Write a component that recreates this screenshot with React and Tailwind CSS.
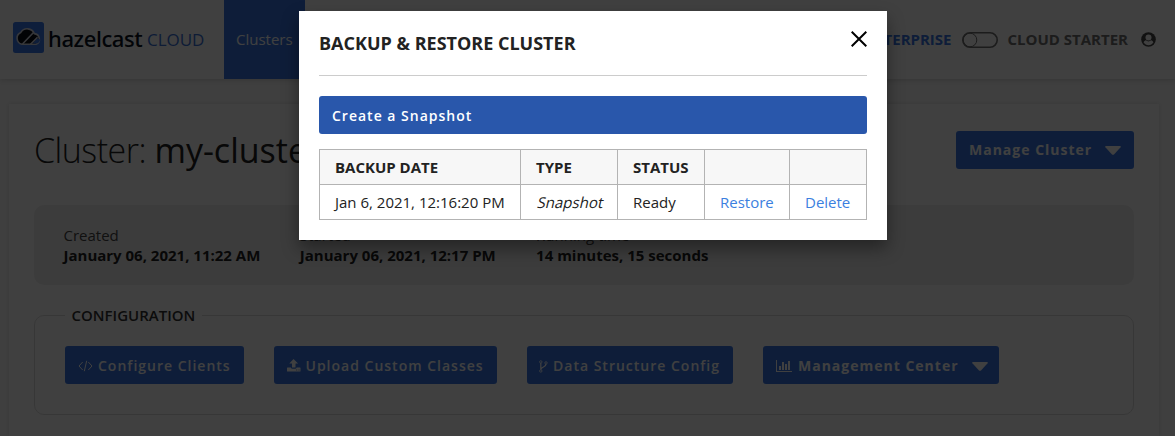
import React from "react";

function Logo() {
  return (
    <div className="flex h-[79px] w-[224px] shrink-0 items-center pl-[13px]">
      <svg className="-mt-[5px] h-[31px] w-[31px] shrink-0" viewBox="0 0 31 31">
        <rect width="31" height="31" rx="2.5" fill="#3a78ea" />
        <path d="M9 22.300a6.300 6.300 0 0 1-1.200-11.900A7.600 7.600 0 0 1 21.300 11.600a5.600 5.600 0 0 1 1.700 10.700z" fill="#080c14" stroke="#d8dce8" strokeWidth="1.600" />
        <path d="M19.500 21.500l4.800-5.300 2.700 1.200a4 4 0 0 1-4 4.100z" fill="#3a78ea" />
        <path d="M9.500 22L20.500 10.500M17.500 22.300l7-7" stroke="#d8dce8" strokeWidth="1.600" />
      </svg>
      <span className="ml-[4px] w-[95px] -mt-[4px] whitespace-nowrap font-['Noto_Sans',sans-serif] text-[22px] leading-[30px] font-medium tracking-[-0.4px] text-[#081020]">hazelcast</span>
      <span className="ml-[4px] whitespace-nowrap text-[17px] leading-[24px] font-medium tracking-[-0.05px] text-[#3a72d8]">CLOUD</span>
    </div>
  );
}

function UserIcon() {
  return (
    <svg className="ml-[13px] h-[15px] w-[15px]" viewBox="0 0 15 15">
      <circle cx="7.5" cy="7.5" r="7.3" fill="#444" />
      <circle cx="7.5" cy="5.5" r="3" fill="#fff" />
      <path d="M2.600 10.500C3.100 9.100 3.900 8.500 4.900 8.300Q7.500 10.500 10.100 8.300C11.100 8.500 11.900 9.100 12.400 10.500A5.800 5.800 0 0 1 2.600 10.500z" fill="#fff" />
    </svg>
  );
}

function Caret() {
  return (
    <svg className="ml-[13px] h-[9px] w-[16px]" viewBox="0 0 16 9">
      <path d="M1 0H15Q16.300 .2 15.600 1.300L9 8.400Q8 9.300 7 8.400L.4 1.300Q-.3 .2 1 0Z" fill="#fff" />
    </svg>
  );
}

function CodeIcon() {
  return (
    <svg className="mr-[5px] h-[12px] w-[15px]" viewBox="0 0 15 12" fill="none" stroke="#fff" strokeWidth="1">
      <path d="M4.700 2L1 6l3.700 4M10.300 2L14 6l-3.700 4M8.700.8L6.300 11.200" />
    </svg>
  );
}

function UploadIcon() {
  return (
    <svg className="-mt-px mr-[4.500px] h-[13px] w-[14px]" viewBox="0 0 14 13">
      <path d="M6.500 0L2.300 4.500H5v4h3.500v-4h2.600zM.5 8.500h3.400q.3 1.200 1.500 1.200h2.700Q9.300 9.700 9.600 8.500h3.400q.5 0 .5.500v3.100q0 .5-.5.500H.5q-.5 0-.5-.5V9Q0 8.500 .5 8.500z" fill="#fff" />
      <path d="M9.200 11h1M11.500 11h1" stroke="#2d5db0" strokeWidth=".8" />
    </svg>
  );
}

function ForkIcon() {
  return (
    <svg className="-ml-px mr-[5px] h-[13px] w-[9px]" viewBox="0 0 9 13" fill="none" stroke="#fff" strokeWidth=".8">
      <circle cx="1.800" cy="1.900" r="1.200" />
      <circle cx="7" cy="2.900" r="1.200" />
      <circle cx="1.800" cy="11" r="1.200" />
      <path d="M1.800 3.100v6.700M7 4.100C7 7.500 2.400 6.500 1.900 9.500" strokeWidth="1.200" />
    </svg>
  );
}

function ChartIcon() {
  return (
    <svg className="-mt-px mr-[6px] h-[12px] w-[16px]" viewBox="0 0 16 12" fill="#fff">
      <path d="M0 0h1v11h15v1H0zM3 6h2v4H3zM6 2h2v8H6zM9 4h2v6H9zM12 1h2v9h-2z" />
    </svg>
  );
}

function PageButton({ children, className }) {
  return (
    <button className={"flex h-[38px] items-center rounded-[3px] bg-[#3876e4] pl-[13px] text-[14px] leading-none whitespace-nowrap text-white " + className}>
      {children}
    </button>
  );
}

function Stat({ label, value }) {
  return (
    <div className="w-[236.300px] text-[15px] leading-[20px] whitespace-nowrap text-[#444]">
      <div>{label}</div>
      <div className="font-bold text-[#222]">{value}</div>
    </div>
  );
}

const cell = "border border-[#b3b3b3] px-[15px] text-left whitespace-nowrap";

function Modal() {
  return (
    <div className="absolute top-[11px] left-[299px] h-[229px] w-[588px] bg-white px-[20px] text-[#222] shadow-[0_8px_16px_rgba(0,0,0,0.4)]">
      <div className="flex h-[65px] items-center justify-between border-b border-[#ccc]">
        <h2 className="mt-px text-[18px] font-bold">BACKUP &amp; RESTORE CLUSTER</h2>
        <svg className="-mt-[8px] h-[16px] w-[16px]" viewBox="0 0 16 16">
          <path d="M.7.7l14.600 14.600M15.300.7L.7 15.300" stroke="#000" strokeWidth="2" />
        </svg>
      </div>
      <button className="mt-[20px] flex h-[38px] w-full items-center rounded-[3px] bg-[#2957ab] pl-[13px] text-[14px] font-semibold tracking-[1px] text-white">
        Create a Snapshot
      </button>
      <table className="mt-[15px] w-full table-fixed border-collapse text-[15px] leading-[20px]">
        <colgroup>
          <col className="w-[201px]" />
          <col className="w-[97px]" />
          <col className="w-[87px]" />
          <col className="w-[85px]" />
          <col className="w-[77px]" />
        </colgroup>
        <thead>
          <tr className="h-[35px] bg-[#f7f7f7]">
            <th className={cell}>BACKUP DATE</th>
            <th className={cell}>TYPE</th>
            <th className={cell}>STATUS</th>
            <th className={cell}></th>
            <th className={cell}></th>
          </tr>
        </thead>
        <tbody>
          <tr className="h-[35px]">
            <td className={cell}>Jan 6, 2021, 12:16:20 PM</td>
            <td className={cell}><em className="ml-[1.500px] inline-block -skew-x-[13deg] not-italic">Snapshot</em></td>
            <td className={cell}>Ready</td>
            <td className={cell + " text-[#3b7fe0]"}>Restore</td>
            <td className={cell + " text-[#3b7fe0]"}>Delete</td>
          </tr>
        </tbody>
      </table>
    </div>
  );
}

export default function App() {
  return (
    <div className="relative h-[436px] w-[1175px] overflow-hidden bg-[#fafafa] font-['Open_Sans',sans-serif]">
      <header className="relative flex h-[79px] items-center bg-white shadow-[0_1px_6px_rgba(0,0,0,0.16)]">
        <Logo />
        <nav className="flex h-full w-[81px] items-center bg-[#3876e4] pl-[12px] text-[15px] text-white">Clusters</nav>
        <div className="ml-auto flex items-center pr-[19px] text-[15px] font-bold whitespace-nowrap">
          <span className="text-[#3876e4]">CLOUD ENTERPRISE</span>
          <svg className="mx-[10px] h-[16px] w-[36px]" viewBox="0 0 36 16" fill="none" stroke="#707070">
            <rect x=".8" y=".8" width="34.400" height="14.400" rx="7.200" strokeWidth="1.600" />
            <circle cx="8" cy="8" r="6.800" />
          </svg>
          <span className="text-[#707070]">CLOUD STARTER</span>
          <UserIcon />
        </div>
      </header>
      <main className="mx-auto mt-[25px] mr-[16px] ml-[9px] h-[332px] bg-white px-[25px] shadow-[0_0_4px_rgba(0,0,0,0.12)]">
        <div className="flex h-[101px] items-start justify-between">
          <h1 className="mt-[22px] text-[34px] leading-[48px] font-light whitespace-nowrap text-[#222]">
            <span className="tracking-[-0.5px]">Cluster: </span><span className="font-normal">my-cluster</span>
          </h1>
          <PageButton className="mt-[27px] w-[178px] font-bold tracking-[1px]">
            Manage Cluster
            <Caret />
          </PageButton>
        </div>
        <section className="flex h-[80px] w-[1100px] rounded-[10px] bg-[#f0f0f0] pt-[20px] pl-[29.500px]">
          <Stat label="Created" value="January 06, 2021, 11:22 AM" />
          <Stat label="Started" value="January 06, 2021, 12:17 PM" />
          <Stat label="Running time" value="14 minutes, 15 seconds" />
        </section>
        <fieldset className="mt-[20px] h-[110px] w-[1100px] rounded-[10px] border border-[#dcdcdc] pl-[30px]">
          <legend className="px-[6.500px] text-[15px] leading-[20px] font-semibold text-[#333]">CONFIGURATION</legend>
          <div className="mt-[21px] flex gap-[30px]">
            <PageButton className="w-[179px] pt-[2px] font-semibold tracking-[1px]"><CodeIcon />Configure Clients</PageButton>
            <PageButton className="w-[223px] pt-[2px] font-semibold tracking-[1px]"><UploadIcon />Upload Custom Classes</PageButton>
            <PageButton className="w-[206px] pt-[2px] font-semibold tracking-[1px]"><ForkIcon />Data Structure Config</PageButton>
            <PageButton className="w-[236px] pt-[2px] font-bold tracking-[1px]"><ChartIcon />Management Center<Caret /></PageButton>
          </div>
        </fieldset>
      </main>
      <div className="absolute inset-0 bg-black/75"></div>
      <Modal />
    </div>
  );
}
